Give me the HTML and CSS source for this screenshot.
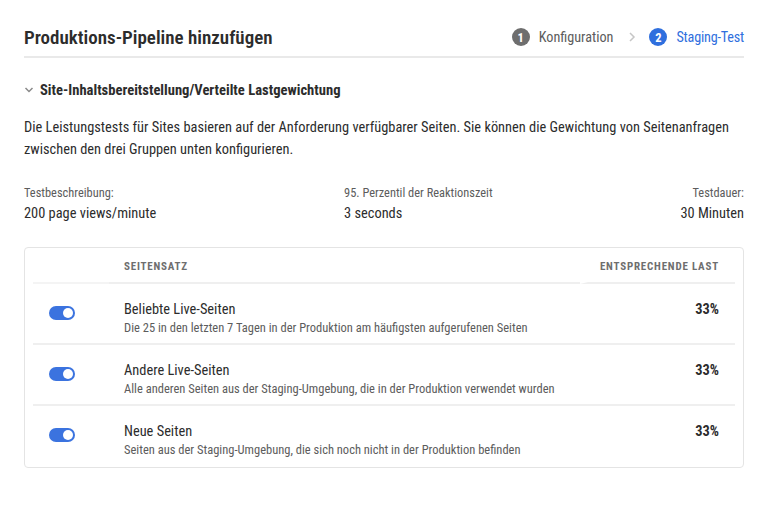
FILE: index.html
```html
<!DOCTYPE html>
<html lang="de">
<head>
<meta charset="utf-8">
<title>Produktions-Pipeline hinzufügen</title>
<link rel="stylesheet" href="styles.css">
</head>
<body>
<div class="page">
  <header class="header">
    <h1 class="title">Produktions-Pipeline hinzufügen</h1>
    <nav class="steps">
      <span class="step done"><span class="num">1</span><span class="label">Konfiguration</span></span>
      <svg class="sep" width="8" height="12" viewBox="0 0 8 12"><path d="M2 2 L6 6 L2 10" fill="none" stroke="#c6c6c6" stroke-width="1.5"/></svg>
      <span class="step active"><span class="num">2</span><span class="label">Staging-Test</span></span>
    </nav>
  </header>

  <section class="section">
    <h2 class="section-title">
      <svg class="chev" width="10" height="8" viewBox="0 0 10 8"><path d="M1.5 2 L5 5.5 L8.5 2" fill="none" stroke="#8a8a8a" stroke-width="1.5"/></svg>
      Site-Inhaltsbereitstellung/Verteilte Lastgewichtung
    </h2>
    <p class="intro">Die Leistungstests für Sites basieren auf der Anforderung verfügbarer Seiten. Sie können die Gewichtung von Seitenanfragen zwischen den drei Gruppen unten konfigurieren.</p>

    <div class="stats">
      <div class="stat"><div class="stat-label">Testbeschreibung:</div><div class="stat-value">200 page views/minute</div></div>
      <div class="stat"><div class="stat-label">95. Perzentil der Reaktionszeit</div><div class="stat-value">3 seconds</div></div>
      <div class="stat right"><div class="stat-label">Testdauer:</div><div class="stat-value">30 Minuten</div></div>
    </div>

    <div class="card">
      <div class="grid thead">
        <div class="th th-toggle"></div>
        <div class="th th-name">SEITENSATZ</div>
        <div class="th th-load">ENTSPRECHENDE LAST</div>
      </div>
      <div class="grid row">
        <div class="cell-toggle"><span class="toggle"><span class="knob"></span></span></div>
        <div class="cell-name"><div class="row-title">Beliebte Live-Seiten</div><div class="row-desc">Die 25 in den letzten 7 Tagen in der Produktion am häufigsten aufgerufenen Seiten</div></div>
        <div class="cell-load">33%</div>
      </div>
      <div class="grid row">
        <div class="cell-toggle"><span class="toggle"><span class="knob"></span></span></div>
        <div class="cell-name"><div class="row-title">Andere Live-Seiten</div><div class="row-desc">Alle anderen Seiten aus der Staging-Umgebung, die in der Produktion verwendet wurden</div></div>
        <div class="cell-load">33%</div>
      </div>
      <div class="grid row last">
        <div class="cell-toggle"><span class="toggle"><span class="knob"></span></span></div>
        <div class="cell-name"><div class="row-title">Neue Seiten</div><div class="row-desc">Seiten aus der Staging-Umgebung, die sich noch nicht in der Produktion befinden</div></div>
        <div class="cell-load">33%</div>
      </div>
    </div>
  </section>
</div>
</body>
</html>
```
FILE: styles.css
```css
* { box-sizing: border-box; }
html, body { margin: 0; padding: 0; background: #fff; }
body {
  font-family: Roboto, "Open Sans", sans-serif;
  font-stretch: condensed;
  color: #2c2c2c;
}
.page { padding: 0 28px 0 24px; }
.header {
  display: flex;
  align-items: center;
  justify-content: space-between;
  height: 58px;
  padding-top: 18px;
  border-bottom: 2px solid #e9e9e9;
}
.title { margin: 0; font-size: 19px; font-weight: 600; color: #2c2c2c; }
.steps { display: flex; align-items: center; font-size: 14.2px; }
.step { display: flex; align-items: center; }
.num {
  width: 18px; height: 18px; border-radius: 50%;
  display: inline-flex; align-items: center; justify-content: center;
  color: #fff; font-size: 12.5px; font-weight: 700; margin-right: 9px;
}
.done .num { background: #6e6e6e; }
.done .label { color: #5c5c5c; }
.active .num { background: #2f6fde; }
.active .label { color: #2f6fde; letter-spacing: -0.2px; }
.sep { margin: 0 13px 0 15px; }
.section { padding-top: 22px; }
.section-title {
  margin: 0; font-size: 14.6px; font-weight: 700; display: flex; align-items: center;
  color: #2c2c2c; height: 20px;
}
.chev { margin: 0 6px 0 0; }
.intro { margin: 17px 0 0; font-size: 14.4px; line-height: 22px; }
.stats { display: flex; justify-content: space-between; margin-top: 24px; }
.stat.right { text-align: right; }
.stat-label { font-size: 12.4px; color: #5c5c5c; line-height: 16px; }
.stat-value { font-size: 14.4px; margin-top: 3px; line-height: 20px; }
.card {
  margin-top: 23px;
  border: 1px solid #e4e4e4;
  border-radius: 4px;
  padding: 0 8px;
}
.grid {
  display: grid;
  grid-template-columns: 68px 1fr 147px;
  column-gap: 8px;
}
.thead { column-gap: 0; grid-template-columns: 76px 1fr 155px; }
.th {
  font-size: 11px; line-height: 13px; font-weight: 700; letter-spacing: 0.8px; color: #6e6e6e;
  height: 36px; padding-top: 12px; border-bottom: 2px solid #efefef;
}
.th-toggle { border-bottom-color: #f4f4f4; }
.th-name { padding-left: 15px; }
.th-load { text-align: right; padding-right: 16px; border-left: 8px solid #fff; }
.row {
  border-bottom: 2px solid #efefef;
  height: 61px;
  padding-top: 16px;
}
.row.last { border-bottom: none; height: 61px; }
.cell-toggle { padding: 6px 0 0 16px; }
.toggle {
  display: block; width: 26px; height: 14px; border-radius: 7px; background: #3b73df; position: relative;
}
.knob {
  position: absolute; right: 2px; top: 2px; width: 10px; height: 10px; border-radius: 50%; background: #fff;
}
.cell-name { padding-left: 15px; }
.row-title { font-size: 14.4px; line-height: 20px; color: #2c2c2c; }
.row-desc { font-size: 12.5px; line-height: 16px; color: #5c5c5c; margin-top: 0; }
.cell-load { text-align: right; padding-right: 16px; font-size: 14.4px; font-weight: 700; line-height: 20px; }
```
